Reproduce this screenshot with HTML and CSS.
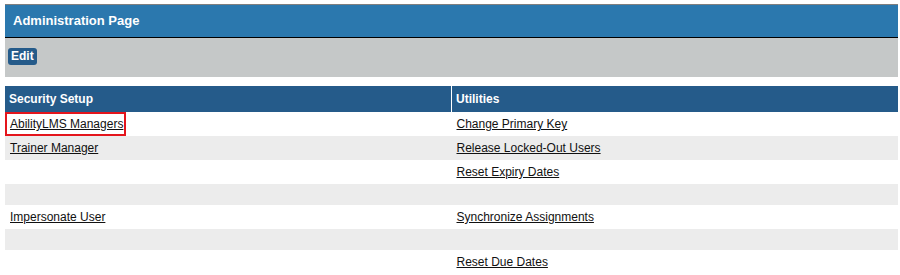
FILE: index.html
```html
<!DOCTYPE html>
<html lang="en">
<head>
    <meta charset="UTF-8">
    <meta name="viewport" content="width=device-width, initial-scale=1.0">
    <title>Administration Page</title>
    <link rel="stylesheet" href="styles.css">
</head>
<body>
    <div class="page">
        <div class="title-bar">Administration Page</div>
        <div class="toolbar">
            <button class="btn">Edit</button>
        </div>

        <table class="admin-table">
            <thead>
                <tr>
                    <th class="col-left">Security Setup</th>
                    <th class="col-right">Utilities</th>
                </tr>
            </thead>
            <tbody>
                <tr>
                    <td><a href="#" class="selected">AbilityLMS Managers</a></td>
                    <td><a href="#">Change Primary Key</a></td>
                </tr>
                <tr>
                    <td><a href="#">Trainer Manager</a></td>
                    <td><a href="#">Release Locked-Out Users</a></td>
                </tr>
                <tr>
                    <td></td>
                    <td><a href="#">Reset Expiry Dates</a></td>
                </tr>
                <tr class="empty">
                    <td></td>
                    <td></td>
                </tr>
                <tr>
                    <td><a href="#">Impersonate User</a></td>
                    <td><a href="#">Synchronize Assignments</a></td>
                </tr>
                <tr class="empty">
                    <td></td>
                    <td></td>
                </tr>
                <tr>
                    <td></td>
                    <td><a href="#">Reset Due Dates</a></td>
                </tr>
            </tbody>
        </table>
    </div>
</body>
</html>
```

FILE: styles.css
```css
/* General styling */
body {
    font-family: "Liberation Sans", Arial, sans-serif;
    font-size: 12px;
    background-color: #fff;
    margin: 0;
    padding: 0;
}

.page {
    padding: 4px 2px 0 5px;
}

.title-bar {
    height: 32px;
    line-height: 32px;
    padding-left: 8px;
    background-color: #2b78ae;
    border-top: 1px solid #7f7f7f;
    border-bottom: 1px solid #000;
    color: #fff;
    font-size: 13px;
    font-weight: bold;
}

/* Toolbar with the edit button */
.toolbar {
    height: 39px;
    box-sizing: border-box;
    padding: 10px 3px;
    background-color: #c5c8c8;
    margin-bottom: 9px;
}

.btn {
    display: block;
    height: 17px;
    padding: 0 3px;
    background-color: #255b8a;
    color: #fff;
    border: none;
    border-radius: 3px;
    font-family: inherit;
    font-size: 12px;
    font-weight: bold;
    line-height: 17px;
    cursor: pointer;
}

/* Admin links table */
.admin-table {
    width: 100%;
    border-collapse: collapse;
    table-layout: fixed;
}

.admin-table th {
    height: 26px;
    padding: 0 4px;
    background-color: #255b8a;
    color: #fff;
    font-weight: bold;
    text-align: left;
}

.admin-table .col-left {
    width: 438px;
}

.admin-table .col-right {
    border-left: 1px solid #fff;
}

.admin-table td {
    height: 24px;
    padding: 0 5px;
    vertical-align: middle;
}

.admin-table tr.empty td {
    height: 21px;
}

.admin-table tbody tr:nth-child(even) {
    background-color: #ececec;
}

.admin-table a {
    color: #111;
    text-decoration: underline;
}

.admin-table a.selected {
    display: inline-block;
    margin-left: -5px;
    padding: 0 1px 0 3px;
    height: 24px;
    line-height: 20px;
    box-sizing: border-box;
    border: 2px solid #e4151c;
}
```
